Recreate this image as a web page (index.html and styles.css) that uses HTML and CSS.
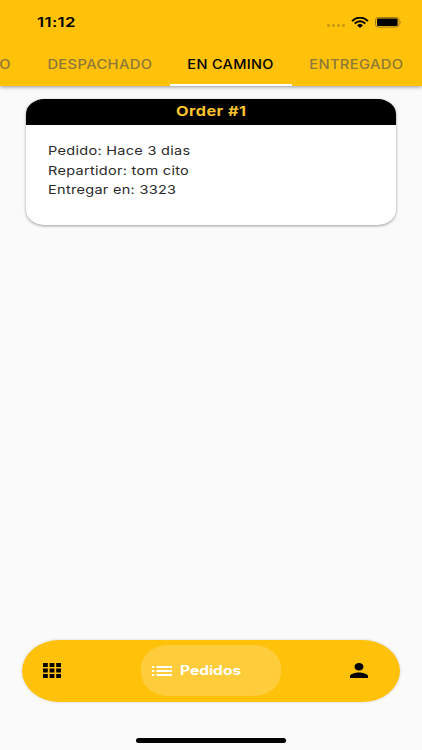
FILE: index.html
```
<!DOCTYPE html>
<html lang="es">
<head>
    <meta charset="UTF-8">
    <meta name="viewport" content="width=device-width, initial-scale=1.0">
    <title>Pedidos</title>
    <link rel="stylesheet" href="styles.css">
</head>
<body>
    <div class="screen">
        <header class="header">
            <div class="status-bar">
                <span class="time">11:12</span>
                <div class="status-icons">
                    <div class="signal"><i></i><i></i><i></i><i></i></div>
                    <svg class="wifi" viewBox="0 0 18 11" preserveAspectRatio="none">
                        <path d="M1 4.1Q9-2.9 17 4.1M3.7 6.5Q9 2 14.3 6.5" fill="none" stroke="#000" stroke-width="1.9"/>
                        <path d="M6 8.4Q9 5.8 12 8.4L9 11Z"/>
                    </svg>
                    <svg class="battery" viewBox="0 0 27 11">
                        <rect x="0.5" y="0.5" width="23.6" height="9.6" rx="2.8" fill="none" stroke="#927016" stroke-width="0.9"/>
                        <rect x="2" y="1.6" width="20.6" height="7.4" rx="1.2"/>
                        <path d="M25.2 3.7Q26.8 5.3 25.2 7Z" fill="#927016"/>
                    </svg>
                </div>
            </div>
            <nav class="tabs">
                <div class="tab tab-cut"><span>O</span></div>
                <div class="tab tab-sent"><span>DESPACHADO</span></div>
                <div class="tab tab-way active"><span>EN CAMINO</span></div>
                <div class="tab tab-done"><span>ENTREGADO</span></div>
            </nav>
        </header>

        <main class="content">
            <div class="card">
                <h2 class="card-title"><span>Order #1</span></h2>
                <div class="card-body">
                    <p>Pedido: Hace 3 dias</p>
                    <p>Repartidor: tom cito</p>
                    <p>Entregar en: 3323</p>
                </div>
            </div>
        </main>

        <nav class="bottom-bar">
            <svg class="icon-grid" viewBox="0 0 18 15" preserveAspectRatio="none">
                <path d="M0 0h4.8v4H0zM6.6 0h4.8v4H6.6zM13.2 0H18v4h-4.8zM0 5.5h4.8v4H0zM6.6 5.5h4.8v4H6.6zM13.2 5.5H18v4h-4.8zM0 11h4.8v4H0zM6.6 11h4.8v4H6.6zM13.2 11H18v4h-4.8z"/>
            </svg>
            <div class="nav-active">
                <svg class="icon-list" viewBox="0 0 20 10">
                    <path d="M0 0h2.3v1.9H0zM4.5 0H20v1.9H4.5zM0 4h2.3v1.9H0zM4.5 4H20v1.9H4.5zM0 8h2.3v1.9H0zM4.5 8H20v1.9H4.5z" fill="#fff"/>
                </svg>
                <span>Pedidos</span>
            </div>
            <svg class="icon-person" viewBox="4 4 16 16" preserveAspectRatio="none">
                <path d="M12 12c2.21 0 4-1.79 4-4s-1.79-4-4-4-4 1.79-4 4 1.79 4 4 4zm0 2c-2.67 0-8 1.34-8 4v2h16v-2c0-2.66-5.33-4-8-4z"/>
            </svg>
        </nav>
        <div class="home-indicator"></div>
    </div>
</body>
</html>
```
FILE: styles.css
```
:root {
    --primary-color: #ffc10a;
    --background: #fafafa;
}

* {
    margin: 0;
    padding: 0;
    box-sizing: border-box;
}

body {
    font-family: Inter, "Liberation Sans", sans-serif;
    background-color: var(--background);
    color: #000;
}

svg {
    display: block;
    flex-shrink: 0;
}

.screen {
    width: 422px;
    height: 750px;
    display: flex;
    flex-direction: column;
    overflow: hidden;
}

/* Header */
.header {
    height: 86px;
    background: var(--primary-color);
    box-shadow: 0 1px 4px rgba(0, 0, 0, 0.4);
}

.status-bar {
    height: 42px;
    padding: 2px 20px 0 37px;
    display: flex;
    align-items: center;
    justify-content: space-between;
}

.time {
    font-size: 13.5px;
    font-weight: 600;
    letter-spacing: 0.3px;
    transform: scaleX(1.24);
    transform-origin: left;
}

.status-icons {
    display: flex;
    align-items: center;
}

.signal {
    display: flex;
    gap: 2px;
    margin: 7px 6px 0 0;
}

.signal i {
    width: 3px;
    height: 2.5px;
    border-radius: 1px;
    background: #cf9d10;
}

.wifi {
    width: 18px;
    height: 11px;
    margin-right: 6px;
}

.battery {
    width: 27px;
    height: 11px;
}

/* Tabs */
.tabs {
    height: 44px;
    display: flex;
}

.tab {
    display: flex;
    align-items: center;
    justify-content: center;
    flex-shrink: 0;
    padding-top: 2px;
    font-size: 12.6px;
    font-weight: 450;
    letter-spacing: 0.3px;
    color: #8c7839;
    border-bottom: 2px solid transparent;
}

.tab span {
    transform: scaleX(1.17);
}

.tab.active {
    color: #000;
    border-bottom-color: #fff;
}

.tab.active span {
    transform: scaleX(1.15);
}

.tab-cut {
    width: 29px;
    justify-content: flex-start;
}

.tab-sent {
    width: 141px;
}

.tab-way {
    width: 122px;
}

.tab-done {
    width: 129px;
}

/* Order card */
.content {
    flex: 1;
    padding: 12.5px 26px 0;
}

.card {
    height: 126.5px;
    border-radius: 18px / 15px;
    overflow: hidden;
    background: #fff;
    box-shadow: 0 1px 3px rgba(0, 0, 0, 0.38);
}

.card-title {
    height: 26.8px;
    line-height: 25px;
    background: #000;
    color: #fbc42c;
    font-size: 13px;
    font-weight: 700;
    letter-spacing: 0.4px;
    text-align: center;
}

.card-title span {
    display: inline-block;
    transform: scaleX(1.25);
}

.card-body {
    padding: 16px 22px;
}

.card-body p {
    width: fit-content;
    line-height: 19.5px;
    font-size: 12.2px;
    letter-spacing: 0.25px;
    color: #2a2a2a;
    transform: scaleX(1.19);
    transform-origin: left;
}

/* Bottom navigation */
.bottom-bar {
    height: 62px;
    margin: 0 22px;
    padding: 0 32px 0 21px;
    display: flex;
    align-items: center;
    justify-content: space-between;
    border-radius: 38px / 31px;
    background: var(--primary-color);
    box-shadow: 0 0 3px rgba(0, 0, 0, 0.16);
}

.icon-grid {
    width: 18px;
    height: 15px;
}

.nav-active {
    width: 140px;
    height: 51px;
    padding-left: 11px;
    margin-left: 10px;
    display: flex;
    align-items: center;
    gap: 8px;
    border-radius: 27px / 23px;
    background: #ffcc3b;
    color: #fff;
    font-size: 12.5px;
    font-weight: 700;
}

.nav-active span {
    transform: scaleX(1.24);
    transform-origin: left;
}

.icon-list {
    width: 20px;
    height: 10px;
}

.icon-person {
    width: 18px;
    height: 15px;
}

.home-indicator {
    width: 150px;
    height: 4.5px;
    margin: 36.5px auto 7.5px;
    border-radius: 3px;
    background: #000;
}
```
